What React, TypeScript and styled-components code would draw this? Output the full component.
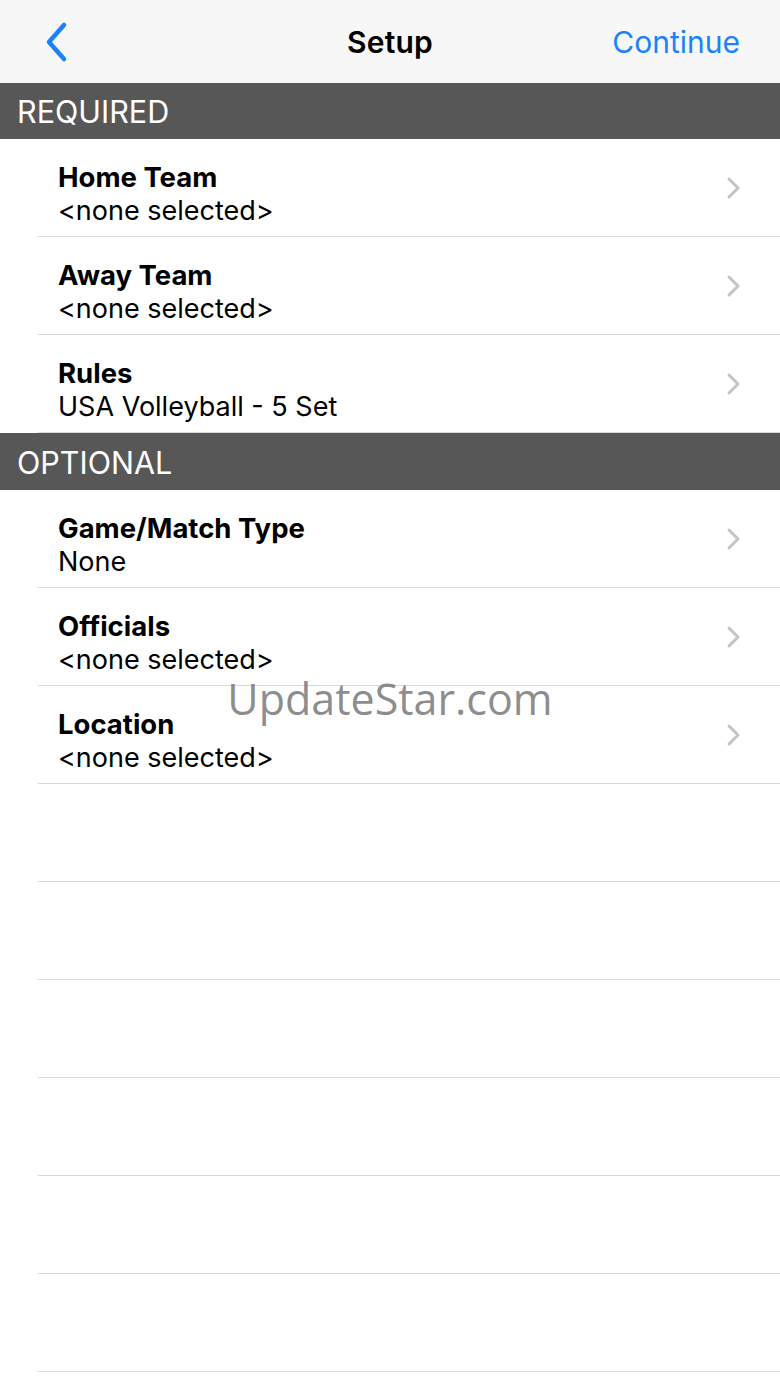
import React from "react";
import styled, { createGlobalStyle } from "styled-components";

const Global = createGlobalStyle`
  html, body { margin: 0; padding: 0; background: #ffffff; }
  body { font-family: Inter, "Liberation Sans", Arial, sans-serif; -webkit-font-smoothing: antialiased; }
  * { box-sizing: border-box; }
`;

const Page = styled.div`
  position: relative;
  width: 780px;
  min-height: 1387px;
  background: #ffffff;
`;

const NavBar = styled.header`
  height: 83px;
  background: #f7f7f7;
  display: grid;
  grid-template-columns: 1fr auto 1fr;
  align-items: center;
  padding: 0 40px 0 40px;
`;

const BackButton = styled.div`
  display: flex;
  align-items: center;
  justify-self: start;
  padding-left: 4px;
`;

const Title = styled.h1`
  margin: 0;
  font-size: 30px;
  font-weight: 600;
  color: #000;
  letter-spacing: 0.2px;
`;

const Action = styled.div`
  justify-self: end;
  font-size: 30px;
  color: #1a82fb;
  font-weight: 400;
`;

const SectionHeader = styled.div<{ $h: number }>`
  height: ${(p) => p.$h}px;
  background: #575757;
  color: #ffffff;
  font-size: 30.5px;
  display: flex;
  align-items: center;
  padding-left: 17px;
  padding-top: 1px;
`;

const Row = styled.div`
  height: 98px;
  display: flex;
  align-items: stretch;
  padding-left: 38px;
`;

const RowInner = styled.div`
  flex: 1;
  display: flex;
  align-items: center;
  border-bottom: 1px solid #d8d8d8;
  padding-left: 20px;
  padding-right: 38px;
`;

const Texts = styled.div`
  flex: 1;
  display: flex;
  flex-direction: column;
  padding-top: 13px;
`;

const RowTitle = styled.div`
  font-size: 27.5px;
  font-weight: 700;
  color: #000;
  line-height: 34px;
`;

const RowSub = styled.div`
  font-size: 27px;
  color: #000;
  line-height: 34px;
`;

const Watermark = styled.div`
  position: absolute;
  top: 669px;
  left: 0;
  right: 0;
  text-align: center;
  font-family: "Open Sans", "Noto Sans", sans-serif;
  font-size: 43px;
  color: rgba(120, 120, 120, 0.85);
  pointer-events: none;
`;

const Chevron = () => (
  <svg width="16" height="24" viewBox="0 0 16 24">
    <path d="M3 3 L12 12 L3 21" fill="none" stroke="#c4c4c8" strokeWidth="3" strokeLinecap="round" strokeLinejoin="round" />
  </svg>
);

const BackIcon = () => (
  <svg width="26" height="42" viewBox="0 0 26 42">
    <path d="M20 4 L5 21 L20 38" fill="none" stroke="#1a82fb" strokeWidth="4.5" strokeLinecap="round" strokeLinejoin="round" />
  </svg>
);

const ListRow = ({ title, sub }: { title?: string; sub?: string }) => (
  <Row>
    <RowInner>
      {title && (
        <>
          <Texts>
            <RowTitle>{title}</RowTitle>
            <RowSub>{sub}</RowSub>
          </Texts>
          <Chevron />
        </>
      )}
    </RowInner>
  </Row>
);

export default function App() {
  return (
    <Page>
      <Global />
      <NavBar>
        <BackButton>
          <BackIcon />
        </BackButton>
        <Title>Setup</Title>
        <Action>Continue</Action>
      </NavBar>
      <SectionHeader $h={56}>REQUIRED</SectionHeader>
      <ListRow title="Home Team" sub="<none selected>" />
      <ListRow title="Away Team" sub="<none selected>" />
      <ListRow title="Rules" sub="USA Volleyball - 5 Set" />
      <SectionHeader $h={57}>OPTIONAL</SectionHeader>
      <ListRow title="Game/Match Type" sub="None" />
      <ListRow title="Officials" sub="<none selected>" />
      <ListRow title="Location" sub="<none selected>" />
      {Array.from({ length: 6 }).map((_, i) => (
        <ListRow key={i} />
      ))}
      <Watermark>UpdateStar.com</Watermark>
    </Page>
  );
}
